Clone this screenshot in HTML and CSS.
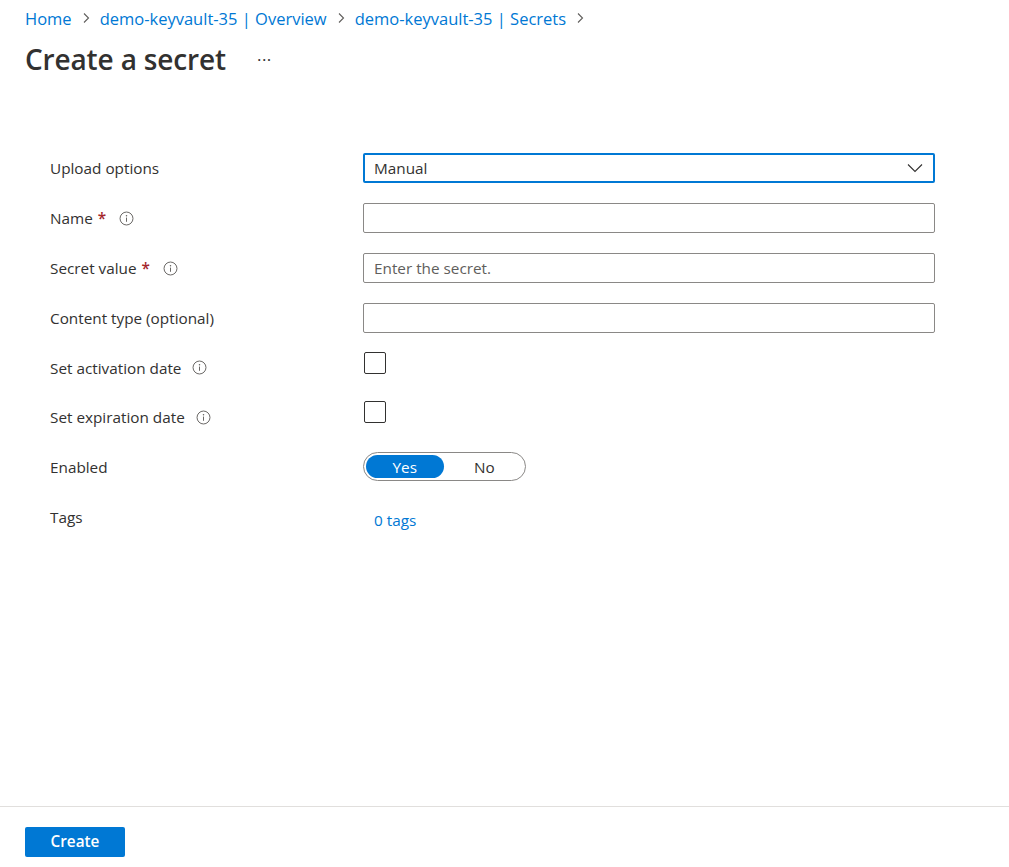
FILE: index.html
```html
<!DOCTYPE html>
<html>
<head>
<meta charset="utf-8">
<link rel="stylesheet" href="styles.css">
</head>
<body>
<div class="page">
  <header class="header">
    <nav class="crumbs">
      <a class="crumb">Home</a>
      <svg class="chev" width="10" height="12" viewBox="0 0 10 12"><path d="M3 1.5 L7.5 6 L3 10.5" fill="none" stroke="#605e5c" stroke-width="1.1"/></svg>
      <a class="crumb">demo-keyvault-35 | Overview</a>
      <svg class="chev" width="10" height="12" viewBox="0 0 10 12"><path d="M3 1.5 L7.5 6 L3 10.5" fill="none" stroke="#605e5c" stroke-width="1.1"/></svg>
      <a class="crumb">demo-keyvault-35 | Secrets</a>
      <svg class="chev" width="10" height="12" viewBox="0 0 10 12"><path d="M3 1.5 L7.5 6 L3 10.5" fill="none" stroke="#605e5c" stroke-width="1.1"/></svg>
    </nav>
    <div class="title-row">
      <h1 class="title">Create a secret</h1>
      <span class="more">···</span>
    </div>
  </header>

  <main class="form">
    <div class="row">
      <div class="label">Upload options</div>
      <div class="control">
        <div class="select">
          <span>Manual</span>
          <svg width="16" height="10" viewBox="0 0 16 10"><path d="M1 1.5 L8 8.5 L15 1.5" fill="none" stroke="#323130" stroke-width="1.1"/></svg>
        </div>
      </div>
    </div>
    <div class="row">
      <div class="label">Name <span class="req">*</span>
        <svg class="info" width="15" height="15" viewBox="0 0 16 16"><circle cx="8" cy="8" r="6.9" fill="none" stroke="#605e5c" stroke-width="1"/><circle cx="8" cy="5" r="0.8" fill="#605e5c"/><path d="M8 7 V11.5" stroke="#605e5c" stroke-width="1"/></svg>
      </div>
      <div class="control"><div class="input"></div></div>
    </div>
    <div class="row">
      <div class="label">Secret value <span class="req">*</span>
        <svg class="info" width="15" height="15" viewBox="0 0 16 16"><circle cx="8" cy="8" r="6.9" fill="none" stroke="#605e5c" stroke-width="1"/><circle cx="8" cy="5" r="0.8" fill="#605e5c"/><path d="M8 7 V11.5" stroke="#605e5c" stroke-width="1"/></svg>
      </div>
      <div class="control"><div class="input"><span class="placeholder">Enter the secret.</span></div></div>
    </div>
    <div class="row">
      <div class="label">Content type (optional)</div>
      <div class="control"><div class="input"></div></div>
    </div>
    <div class="row short">
      <div class="label">Set activation date
        <svg class="info wide" width="15" height="15" viewBox="0 0 16 16"><circle cx="8" cy="8" r="6.9" fill="none" stroke="#605e5c" stroke-width="1"/><circle cx="8" cy="5" r="0.8" fill="#605e5c"/><path d="M8 7 V11.5" stroke="#605e5c" stroke-width="1"/></svg>
      </div>
      <div class="control"><div class="checkbox"></div></div>
    </div>
    <div class="row">
      <div class="label">Set expiration date
        <svg class="info wide" width="15" height="15" viewBox="0 0 16 16"><circle cx="8" cy="8" r="6.9" fill="none" stroke="#605e5c" stroke-width="1"/><circle cx="8" cy="5" r="0.8" fill="#605e5c"/><path d="M8 7 V11.5" stroke="#605e5c" stroke-width="1"/></svg>
      </div>
      <div class="control"><div class="checkbox"></div></div>
    </div>
    <div class="row short">
      <div class="label">Enabled</div>
      <div class="control">
        <div class="toggle">
          <span class="opt on">Yes</span>
          <span class="opt">No</span>
        </div>
      </div>
    </div>
    <div class="row tall">
      <div class="label">Tags</div>
      <div class="control"><a class="link">0 tags</a></div>
    </div>
  </main>

  <footer class="footer">
    <button class="btn">Create</button>
  </footer>
</div>
</body>
</html>
```
FILE: styles.css
```css
* { box-sizing: border-box; }
html, body { margin: 0; padding: 0; background: #fff; }
body {
  font-family: "Open Sans", "Noto Sans", sans-serif;
  color: #323130;
}
.page {
  min-height: 100vh;
  display: flex;
  flex-direction: column;
}
.header { padding: 0 25px; }
.crumbs {
  display: flex;
  align-items: center;
  height: 36px;
  font-size: 16.5px;
}
.crumb { color: #0078d4; text-decoration: none; }
.chev { margin: 0 9px 0 9px; }
.title-row {
  display: flex;
  align-items: center;
  height: 46px;
}
.title {
  margin: 0;
  font-size: 28px;
  font-weight: 600;
  color: #323130;
  letter-spacing: -0.15px;
}
.more {
  margin-left: 31px;
  font-size: 17px;
  letter-spacing: 0.5px;
  color: #323130;
  margin-top: 0;
}
.form {
  flex: 1;
  padding: 61px 0 0 50px;
}
.row {
  display: flex;
  align-items: center;
  height: 50px;
}
.row.short { height: 49px; }
.row.tall { height: 51px; }
.label {
  width: 313px;
  font-size: 15.3px;
  display: flex;
  align-items: center;
}
.req { color: #a4262c; margin-left: 5px; font-weight: 600; }
.info { margin-left: 13px; }
.info.wide { margin-left: 11px; }
.control { width: 572px; display: flex; align-items: center; }
.select {
  width: 100%;
  height: 30px;
  border: 2px solid #0078d4;
  border-radius: 2px;
  display: flex;
  align-items: center;
  justify-content: space-between;
  padding: 0 10px 0 9px;
  font-size: 15.3px;
}
.input {
  width: 100%;
  height: 30px;
  border: 1px solid #8a8886;
  border-radius: 2px;
  display: flex;
  align-items: center;
  padding: 0 10px;
  font-size: 15.3px;
}
.placeholder { color: #605e5c; }
.checkbox {
  width: 22px;
  height: 22px;
  border: 1px solid #323130;
  border-radius: 2px;
  margin-left: 1px;
  margin-bottom: 10px;
}
.toggle {
  width: 163px;
  height: 29px;
  border: 1px solid #8a8886;
  border-radius: 15px;
  padding: 2px;
  display: flex;
}
.opt {
  flex: 1;
  display: flex;
  align-items: center;
  justify-content: center;
  font-size: 15.3px;
  border-radius: 12px;
  color: #323130;
}
.opt.on { background: #0078d4; color: #fff; margin-right: 2px; }
.link {
  color: #0078d4;
  font-size: 15.3px;
  margin-left: 11px;
  margin-top: 6px;
}
.footer {
  border-top: 1px solid #e1dfdd;
  padding: 20px 25px 10px;
  height: 61px;
}
.btn {
  width: 100px;
  height: 30px;
  background: #0078d4;
  color: #fff;
  border: none;
  border-radius: 2px;
  font-family: "Open Sans", "Noto Sans", sans-serif;
  font-weight: 600;
  font-size: 15.3px;
  padding: 0 0 2px;
}
```
